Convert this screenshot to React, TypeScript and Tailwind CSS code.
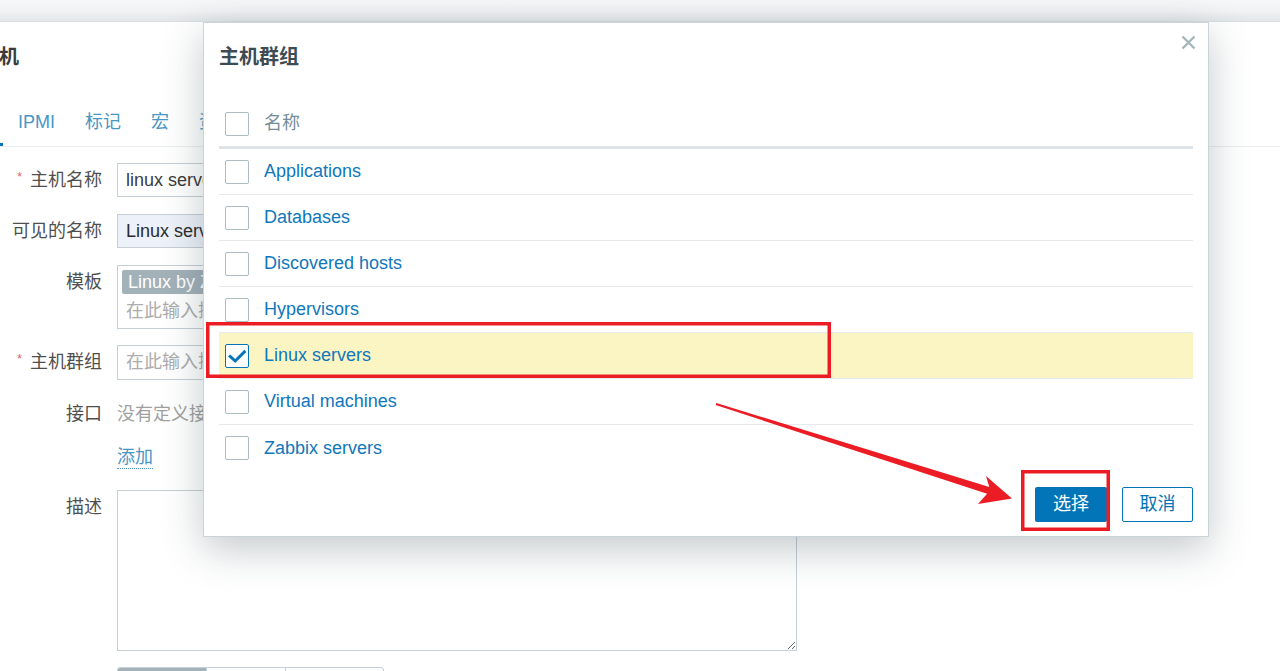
import React from 'react';

const groups = [
  'Applications',
  'Databases',
  'Discovered hosts',
  'Hypervisors',
  'Linux servers',
  'Virtual machines',
  'Zabbix servers',
];

function Checkbox({ checked = false }: { checked?: boolean }) {
  return (
    <span
      className={
        'flex h-[24px] w-[24px] shrink-0 items-center justify-center rounded-[2px] border bg-white ' +
        (checked ? 'border-[#0275b8]' : 'border-[#acbbc2]')
      }
    >
      {checked && (
        <svg width="22" height="22" viewBox="0 0 24 24" fill="none">
          <path d="M4.5 12.5l5.5 5 10-10" stroke="#0275b8" strokeWidth="3.2" strokeLinecap="square" />
        </svg>
      )}
    </span>
  );
}

function FormRow({ label, required, children, className = '' }: { label: string; required?: boolean; children: React.ReactNode; className?: string }) {
  return (
    <div className={'flex ' + className}>
      <div className="h-[34px] w-[102px] shrink-0 text-right leading-[34px] text-[#4f4f4f]">
        {required && <span className="relative top-[-5px] mr-[8px] text-[12px] leading-none text-[#e45959]">*</span>}
        {label}
      </div>
      <div className="ml-[15px]">{children}</div>
    </div>
  );
}

function HostGroupPicker() {
  return (
    <div className="absolute left-[203px] top-[22px] w-[1006px] border border-[#cad3d8] bg-white px-[15px] pb-[14px] pt-[20px] shadow-[0_12px_38px_rgba(40,60,70,0.28)]">
      <button className="absolute right-[12px] top-[12px]">
        <svg width="15" height="15" viewBox="0 0 15 15">
          <path d="M1.5 1.5l12 12M13.5 1.5l-12 12" stroke="#a6b4bc" strokeWidth="2.4" />
        </svg>
      </button>
      <h2 className="text-[20px] font-bold leading-[28px] text-[#3c4b54]">主机群组</h2>

      <div className="mt-[30px]">
        <div className="flex h-[48px] items-center border-b-[3px] border-[#dde3e6] pl-[6px]">
          <Checkbox />
          <span className="ml-[15px] text-[#768c98]">名称</span>
        </div>
        {groups.map((name, i) => {
          const selected = name === 'Linux servers';
          const last = i === groups.length - 1;
          return (
            <div
              key={name}
              className={
                'flex h-[46px] items-center pl-[6px] ' +
                (last ? '' : 'border-b border-[#e6eaec] ') +
                (selected ? 'bg-[#fbf5c4]' : '')
              }
            >
              <Checkbox checked={selected} />
              <span className="ml-[15px] text-[#0f77bc]">{name}</span>
            </div>
          );
        })}
      </div>

      <div className="mt-[16px] flex justify-end gap-[15px]">
        <button className="h-[35px] w-[72px] rounded-[2px] bg-[#0275b8] text-white">选择</button>
        <button className="h-[35px] w-[71px] rounded-[2px] border border-[#0275b8] bg-white text-[#0275b8]">取消</button>
      </div>
    </div>
  );
}

function Callouts() {
  return (
    <svg className="pointer-events-none absolute inset-0" width="1280" height="671">
      <rect x="207.75" y="323.75" width="621.5" height="52.5" fill="none" stroke="#ec1c24" strokeWidth="3.5" />
      <rect x="1022.75" y="471.75" width="85.5" height="57.5" fill="none" stroke="#ec1c24" strokeWidth="3.5" />
      <polygon
        points="716.3,403.0 989.3,487.1 986,476 1012,498.5 978,504 987.1,493.7 715.7,405.0"
        fill="#ec1c24"
      />
    </svg>
  );
}

export default function App() {
  return (
    <div className="relative h-[671px] w-[1280px] overflow-hidden bg-white font-['Liberation_Sans','Noto_Sans_CJK_SC',sans-serif] text-[18px]">
      <div className="h-[22px] border-b border-[#d9dfe2] bg-gradient-to-b from-[#f7f8f8] via-[#f1f3f4] to-[#e2e6e8]" />

      {/* host edit form behind the picker */}
      <div className="pt-[21px]">
        <h1 className="ml-[-21px] text-[20px] font-bold leading-[28px] text-[#3b3b3b]">主机</h1>

        <div className="mt-[30px] flex h-[46px] border-b border-[#ebeef0]">
          <div className="ml-[-63px] flex items-center border-b-[3px] border-[#0275b8] px-[15px] text-[#1f2c33]">主机</div>
          {['IPMI', '标记', '宏', '资产', '加密'].map((t) => (
            <div key={t} className="flex items-center border-b-[3px] border-transparent px-[15px] text-[#4796c4]">
              {t}
            </div>
          ))}
        </div>

        <div className="pt-[16px]">
          <FormRow label="主机名称" required>
            <div className="flex h-[34px] w-[680px] items-center border border-[#c5cfd4] px-[8px] text-[#3b3b3b]">linux server</div>
          </FormRow>
          <FormRow label="可见的名称" className="mt-[17px]">
            <div className="flex h-[34px] w-[680px] items-center border border-[#c5cfd4] bg-[#edf1f9] px-[8px] text-[#2b2b2b]">Linux server</div>
          </FormRow>
          <FormRow label="模板" className="mt-[17px]">
            <div className="h-[64px] w-[680px] border border-[#c5cfd4] px-[4px] pt-[4px]">
              <span className="flex h-[24px] w-fit items-center rounded-[2px] bg-[#a3b1b9] px-[6px] text-white">Linux by Zabbix agent</span>
              <div className="mt-[4px] px-[4px] leading-[26px] text-[#acacac]">在此输入搜索</div>
            </div>
          </FormRow>
          <FormRow label="主机群组" required className="mt-[16px]">
            <div className="flex h-[35px] w-[680px] items-center border border-[#c5cfd4] px-[8px] text-[#acacac]">在此输入搜索</div>
          </FormRow>
          <FormRow label="接口" className="mt-[17px]">
            <div className="leading-[34px] text-[#a0a0a0]">没有定义接口。</div>
          </FormRow>
          <FormRow label="" className="mt-[9px]">
            <div className="flex h-[34px] items-center">
              <span className="border-b border-dotted border-[#4796c4] leading-[22px] text-[#4796c4]">添加</span>
            </div>
          </FormRow>
          <FormRow label="描述" className="mt-[16px]">
            <textarea readOnly className="block h-[161px] w-[680px] border border-[#c5cfd4] outline-none" />
          </FormRow>
          <FormRow label="" className="mt-[16px]">
            <div className="flex h-[30px] overflow-hidden rounded-t-[3px] border border-[#c5cfd4] text-[16px]">
              <span className="w-[88px] bg-[#a3b1b9] text-center leading-[30px] text-white">服务器</span>
              <span className="w-[79px] border-l border-[#c5cfd4] text-center leading-[30px]">代理</span>
              <span className="w-[98px] border-l border-[#c5cfd4] text-center leading-[30px]">代理组</span>
            </div>
          </FormRow>
        </div>
      </div>

      <HostGroupPicker />
      <Callouts />
    </div>
  );
}
